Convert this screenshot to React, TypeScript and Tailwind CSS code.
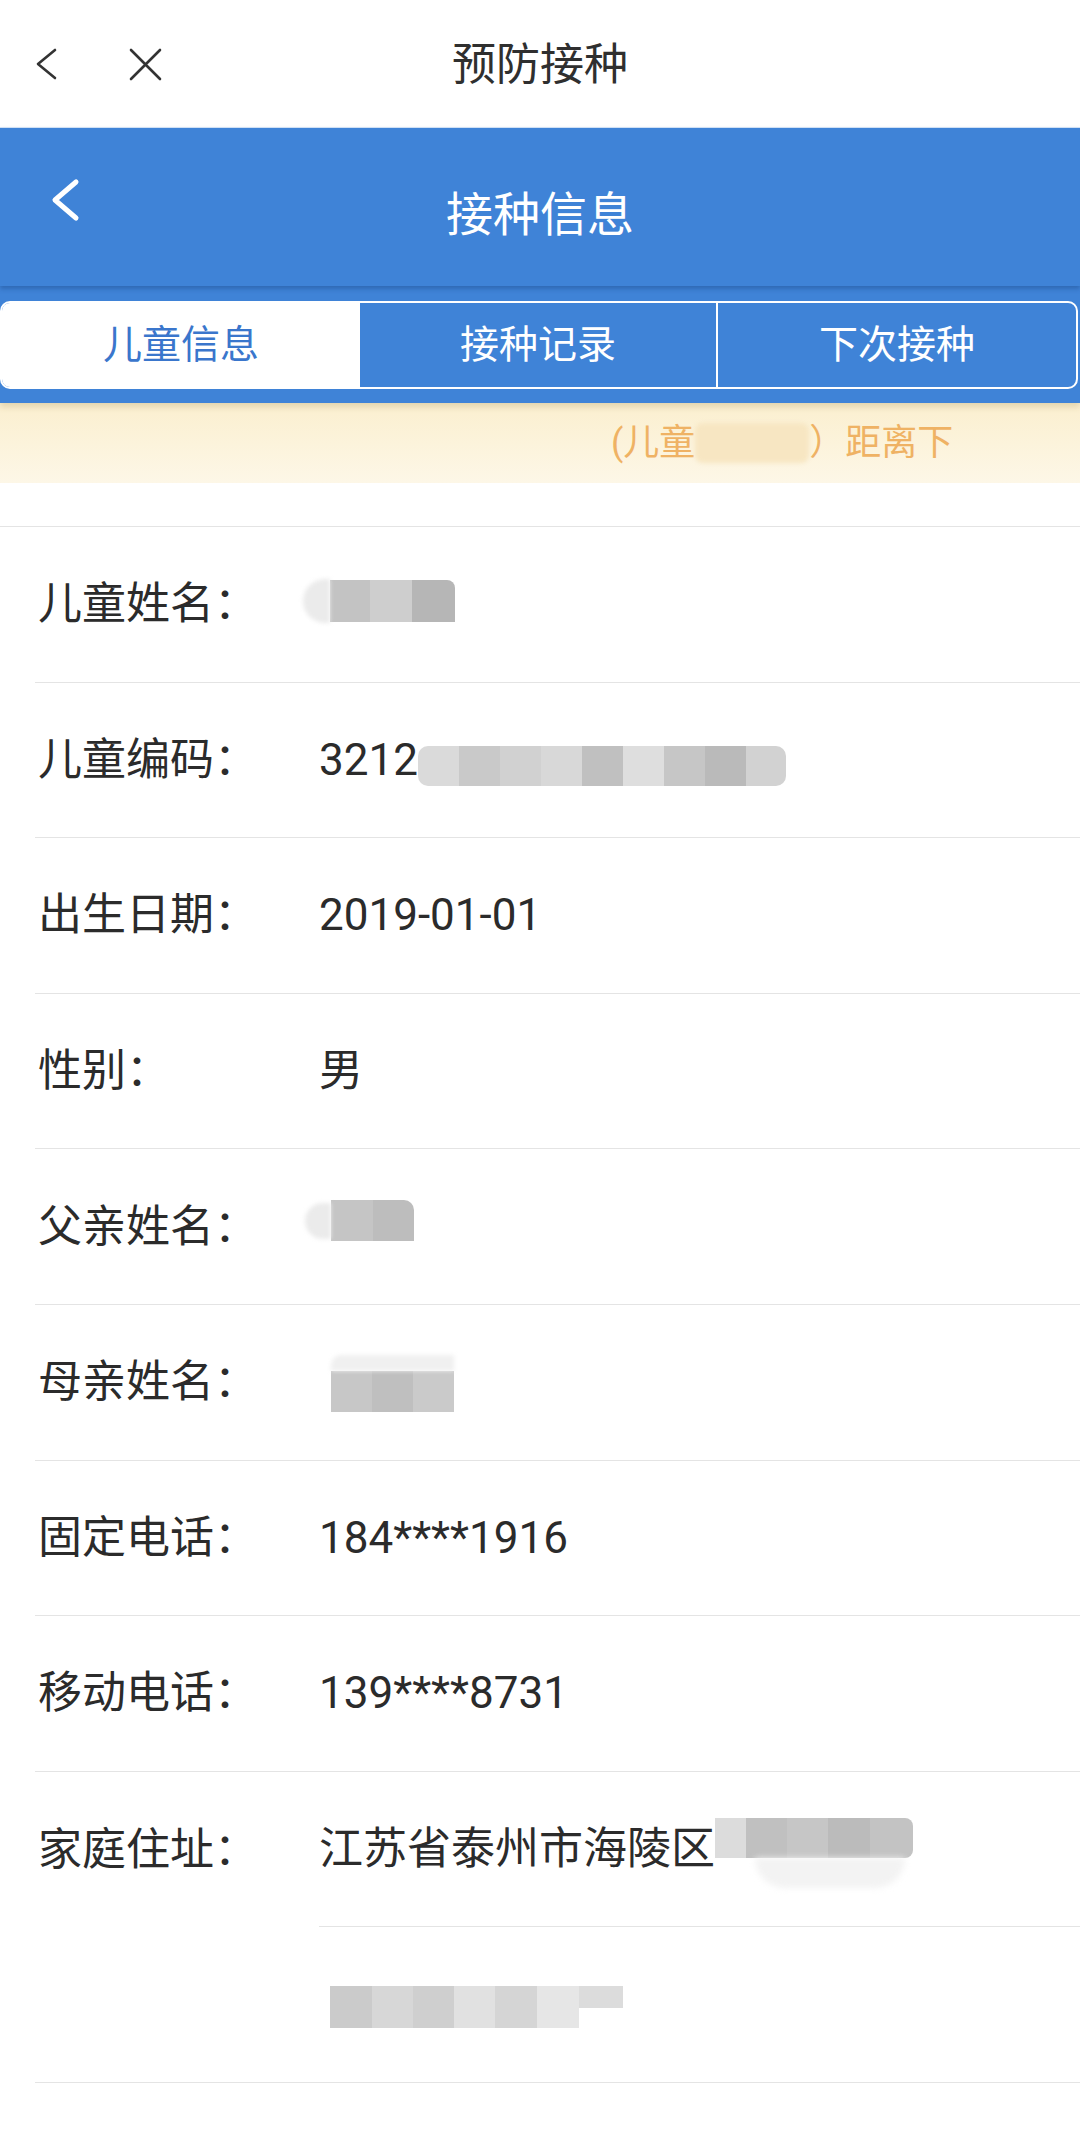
import React from "react";

function Row({ label, children }: { label: string; children?: React.ReactNode }) {
  return (
    <div className="ml-[35px] h-[155.6px] border-b border-[#e4e4e4] flex items-center">
      <div className="w-[284px] pl-[3px] text-[44px] leading-none text-[#2b2b2b]">{label}</div>
      <div className="flex items-center text-[44px] leading-none text-[#2b2b2b]">{children}</div>
    </div>
  );
}

export default function App() {
  return (
    <div className="w-[1080px] h-[2136px] bg-white overflow-hidden font-['Roboto','Noto_Sans_CJK_SC',sans-serif]">
      {/* top nav */}
      <div className="h-[127px] grid grid-cols-[1fr_auto_1fr] items-center bg-white">
        <div className="flex items-center pl-[30px] gap-[65px]">
          <svg width="30" height="40" viewBox="0 0 30 40" fill="none">
            <path d="M25 6 L8 20 L25 34" stroke="#333" strokeWidth="2.6" strokeLinecap="round" strokeLinejoin="round" />
          </svg>
          <svg width="40" height="40" viewBox="0 0 40 40" fill="none">
            <path d="M6 6 L35 35 M35 6 L6 35" stroke="#333" strokeWidth="2.6" strokeLinecap="round" />
          </svg>
        </div>
        <div className="text-[44px] leading-none text-[#2f2f2f] pt-[2px]">预防接种</div>
        <div />
      </div>

      {/* blue header */}
      <div className="relative z-20 h-[159px] bg-[#3f83d7] grid grid-cols-[1fr_auto_1fr] items-center shadow-[0_3px_4px_rgba(20,60,120,0.35)] border-t border-[#cfe0f5]">
        <div className="flex items-center pl-[45px] -mt-[14px]">
          <svg width="40" height="50" viewBox="0 0 40 50" fill="none">
            <path d="M31 7 L10 25 L31 43" stroke="#ffffff" strokeWidth="5" strokeLinecap="round" strokeLinejoin="round" />
          </svg>
        </div>
        <div className="text-[47px] leading-none text-white pt-[14px]">接种信息</div>
        <div />
      </div>

      {/* tabs */}
      <div className="relative z-10 h-[117px] bg-[#3f83d7] pt-[15px] pr-[2px] shadow-[0_4px_6px_rgba(120,100,40,0.18)]">
        <div className="h-[88px] flex rounded-[10px] border-2 border-white overflow-hidden">
          <div className="w-[358px] bg-white flex items-center justify-center text-[39px] leading-none text-[#3a76cc]">
            儿童信息
          </div>
          <div className="w-[358px] border-r-2 border-white flex items-center justify-center text-[39px] leading-none text-white">
            接种记录
          </div>
          <div className="flex-1 flex items-center justify-center text-[39px] leading-none text-white">
            下次接种
          </div>
        </div>
      </div>

      {/* banner */}
      <div className="h-[80px] bg-gradient-to-b from-[#fbefcf] to-[#fdf7e7] flex items-center pl-[611px] text-[36px] leading-none text-[#efb264]">
        <span>(儿童</span>
        <span className="inline-block w-[114px] h-[40px] bg-[#f7e6c2] rounded-[8px] blur-[2px]" />
        <span>）距离下</span>
      </div>

      {/* spacer */}
      <div className="h-[44px] border-b border-[#e4e4e4]" />

      <Row label="儿童姓名：">
        <div className="flex items-center -ml-[16px] -mt-[6px]">
          <div className="w-[27px] h-[44px] rounded-l-full bg-[#ebebeb] blur-[2px]" />
          <div className="flex h-[42px]">
            <div className="w-[40px] bg-[#c3c3c3]" />
            <div className="w-[42px] bg-[#cecece]" />
            <div className="w-[43px] bg-[#b6b6b6] rounded-tr-[8px]" />
          </div>
        </div>
      </Row>

      <Row label="儿童编码：">
        <span>3212</span>
        <div className="flex h-[40px] mt-[12px]">
          <div className="w-[41px] bg-[#dadada] rounded-l-[10px]" />
          <div className="w-[41px] bg-[#c9c9c9]" />
          <div className="w-[41px] bg-[#d1d1d1]" />
          <div className="w-[41px] bg-[#d8d8d8]" />
          <div className="w-[41px] bg-[#c0c0c0]" />
          <div className="w-[41px] bg-[#dedede]" />
          <div className="w-[41px] bg-[#c6c6c6]" />
          <div className="w-[41px] bg-[#bababa]" />
          <div className="w-[40px] bg-[#d2d2d2] rounded-r-[10px]" />
        </div>
      </Row>

      <Row label="出生日期：">
        <span>2019-01-01</span>
      </Row>

      <Row label="性别：">
        <span>男</span>
      </Row>

      <Row label="父亲姓名：">
        <div className="flex items-center -ml-[14px] -mt-[12px]">
          <div className="w-[26px] h-[36px] rounded-l-full bg-[#ebebeb] blur-[2px]" />
          <div className="flex h-[41px]">
            <div className="w-[42px] bg-[#c5c5c5]" />
            <div className="w-[41px] bg-[#bdbdbd] rounded-tr-[10px]" />
          </div>
        </div>
      </Row>

      <Row label="母亲姓名：">
        <div className="flex flex-col ml-[12px] mt-[2px]">
          <div className="w-[123px] h-[16px] bg-[#f0f0f0] blur-[2px] rounded-tl-[10px]" />
          <div className="flex h-[41px]">
            <div className="w-[41px] bg-[#c7c7c7]" />
            <div className="w-[41px] bg-[#bfbfbf]" />
            <div className="w-[41px] bg-[#cacaca]" />
          </div>
        </div>
      </Row>

      <Row label="固定电话：">
        <span>184****1916</span>
      </Row>

      <Row label="移动电话：">
        <span>139****8731</span>
      </Row>

      {/* address */}
      <div className="ml-[35px] flex border-b border-[#e4e4e4]">
        <div className="w-[284px] pl-[3px] h-[155.6px] flex items-center text-[44px] leading-none text-[#2b2b2b]">
          家庭住址：
        </div>
        <div className="flex-1">
          <div className="h-[155.6px] border-b border-[#e4e4e4] flex items-center text-[44px] leading-none text-[#2b2b2b]">
            <span>江苏省泰州市海陵区</span>
            <div className="flex flex-col mt-[8px]">
              <div className="flex h-[40px]">
                <div className="w-[31px] bg-[#dcdcdc]" />
                <div className="w-[41px] bg-[#c0c0c0]" />
                <div className="w-[41px] bg-[#c6c6c6]" />
                <div className="w-[42px] bg-[#bbbbbb]" />
                <div className="w-[43px] bg-[#c3c3c3] rounded-r-[8px]" />
              </div>
              <div className="ml-[40px] w-[150px] h-[30px] bg-[#f3f3f3] blur-[3px] rounded-b-full" />
            </div>
          </div>
          <div className="h-[154.6px] flex items-center">
            <div className="flex flex-col ml-[11px] mt-[4px]">
              <div className="flex h-[42px]">
                <div className="w-[42px] bg-[#cbcbcb]" />
                <div className="w-[41px] bg-[#d7d7d7]" />
                <div className="w-[41px] bg-[#cfcfcf]" />
                <div className="w-[41px] bg-[#e1e1e1]" />
                <div className="w-[42px] bg-[#d5d5d5]" />
                <div className="w-[42px] bg-[#e6e6e6]" />
                <div className="w-[44px] h-[22px] bg-[#dcdcdc]" />
              </div>
            </div>
          </div>
        </div>
      </div>
    </div>
  );
}
